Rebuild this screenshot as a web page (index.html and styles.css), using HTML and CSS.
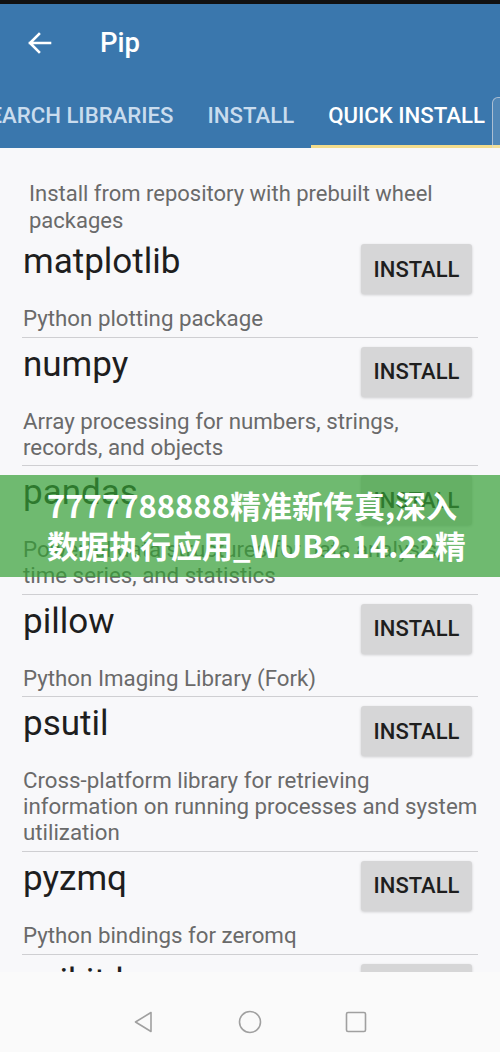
FILE: index.html
```html
<!DOCTYPE html>
<html>
<head>
<meta charset="utf-8">
<link rel="stylesheet" href="styles.css">
</head>
<body>
<div class="screen">
  <div class="status"></div>
  <header class="appbar">
    <svg class="back" width="26" height="24" viewBox="0 0 26 24">
      <path d="M24 12H4M13 3L4 12L13 21" fill="none" stroke="#fff" stroke-width="2.6" stroke-linecap="square"/>
    </svg>
    <div class="title">Pip</div>
  </header>
  <nav class="tabs">
    <div class="tab">SEARCH LIBRARIES</div>
    <div class="tab">INSTALL</div>
    <div class="tab active">QUICK INSTALL</div>
  </nav>
  <div class="edge-panel"></div>
  <main class="content">
    <p class="intro">Install from repository with prebuilt wheel packages</p>
    <div class="item">
      <div class="row"><div class="name">matplotlib</div><button class="btn">INSTALL</button></div>
      <div class="desc">Python plotting package</div>
    </div>
    <div class="item">
      <div class="row"><div class="name">numpy</div><button class="btn">INSTALL</button></div>
      <div class="desc">Array processing for numbers, strings, records, and objects</div>
    </div>
    <div class="item">
      <div class="row"><div class="name">pandas</div><button class="btn">INSTALL</button></div>
      <div class="desc">Powerful data structures for data analysis, time series, and statistics</div>
    </div>
    <div class="item">
      <div class="row"><div class="name">pillow</div><button class="btn">INSTALL</button></div>
      <div class="desc">Python Imaging Library (Fork)</div>
    </div>
    <div class="item">
      <div class="row"><div class="name">psutil</div><button class="btn">INSTALL</button></div>
      <div class="desc">Cross-platform library for retrieving information on running processes and system utilization</div>
    </div>
    <div class="item">
      <div class="row"><div class="name">pyzmq</div><button class="btn">INSTALL</button></div>
      <div class="desc">Python bindings for zeromq</div>
    </div>
    <div class="item">
      <div class="row"><div class="name">scikit-learn</div><button class="btn">INSTALL</button></div>
      <div class="desc">Machine learning in Python</div>
    </div>
    <div class="banner">
      <span class="bline">7777788888精准新传真,深入</span>
      <span class="bline">数据执行应用_WUB2.14.22精</span>
    </div>
  </main>
  <footer class="navbar">
    <svg width="24" height="24" viewBox="0 0 24 24"><path d="M19 2.5V21.5L3.5 12Z" fill="none" stroke="#a0a0a0" stroke-width="1.6" stroke-linejoin="round"/></svg>
    <svg width="24" height="24" viewBox="0 0 24 24"><circle cx="12" cy="12" r="10.5" fill="none" stroke="#a0a0a0" stroke-width="1.6"/></svg>
    <svg width="24" height="24" viewBox="0 0 24 24"><rect x="2.5" y="2.5" width="19" height="19" rx="1.5" fill="none" stroke="#a0a0a0" stroke-width="1.6"/></svg>
  </footer>
</div>
</body>
</html>
```
FILE: styles.css
```css
html, body {
  margin: 0;
  padding: 0;
}
body {
  width: 500px;
  height: 1052px;
  overflow: hidden;
  font-family: Roboto, "Liberation Sans", sans-serif;
  background: #f8f8fa;
}
.screen {
  position: relative;
  width: 500px;
  height: 1052px;
  overflow: hidden;
}
.status {
  height: 4px;
  background: #111;
}
.appbar {
  height: 76px;
  background: #3a77ad;
  display: flex;
  align-items: center;
  color: #fff;
}
.back {
  margin-left: 26px;
  margin-top: 2px;
}
.title {
  margin-left: 48px;
  font-size: 27.5px;
  font-weight: 500;
  margin-top: 1px;
}
.tabs {
  height: 68px;
  background: #3a77ad;
  display: flex;
  white-space: nowrap;
  overflow: hidden;
}
.tab {
  flex: none;
  padding: 0 17px;
  height: 65px;
  line-height: 70px;
  font-size: 22.2px;
  font-weight: 500;
  color: #c9dcee;
  border-bottom: 3px solid transparent;
}
.tab:first-child {
  margin-left: -41px;
}
.tab.active {
  color: #fff;
  border-bottom-color: #f2dc8c;
}
.edge-panel {
  position: absolute;
  left: 492px;
  top: 97px;
  width: 20px;
  height: 191px;
  border: 1px solid rgba(210, 214, 222, 0.7);
  border-radius: 6px;
  background: rgba(255, 255, 255, 0.12);
  box-sizing: border-box;
}
.content {
  position: relative;
  height: 824px;
  overflow: hidden;
  background: #f8f8fa;
}
.intro {
  margin: 0 0 1px 29px;
  padding-top: 33px;
  width: 440px;
  font-size: 22px;
  line-height: 26.5px;
  color: #6a6a6a;
}
.item {
  margin: 0 22px;
  padding: 9px 0 5.6px;
  border-bottom: 1px solid #cfcfd2;
}
.row {
  display: flex;
  justify-content: space-between;
  align-items: flex-start;
  height: 50px;
}
.name {
  padding-left: 1px;
  font-size: 35px;
  line-height: 35px;
  color: #1e1e1e;
}
.btn {
  width: 111px;
  height: 50px;
  margin-right: 6px;
  border: none;
  border-radius: 3px;
  background: #d6d6d7;
  box-shadow: 0 1px 3px rgba(0, 0, 0, 0.18);
  font-family: Roboto, "Liberation Sans", sans-serif;
  font-size: 22px;
  font-weight: 500;
  color: #1e1e1e;
  padding: 0;
}
.desc {
  margin-top: 11px;
  padding-left: 1px;
  font-size: 22.3px;
  line-height: 26px;
  color: #6a6a6a;
}
.banner {
  position: absolute;
  left: 0;
  top: 327px;
  width: 500px;
  height: 102px;
  box-sizing: border-box;
  padding: 10px 0 0 47px;
  background: rgba(52, 160, 52, 0.7);
  color: #fff;
  font-family: "Noto Sans CJK SC", "Noto Sans", sans-serif;
  font-weight: 700;
  font-size: 31px;
  line-height: 40px;
  overflow: hidden;
}
.bline {
  display: block;
  white-space: nowrap;
}
.navbar {
  height: 80px;
  background: #fafafa;
  display: flex;
  justify-content: center;
  gap: 82px;
  padding-top: 38px;
  box-sizing: border-box;
}
```
